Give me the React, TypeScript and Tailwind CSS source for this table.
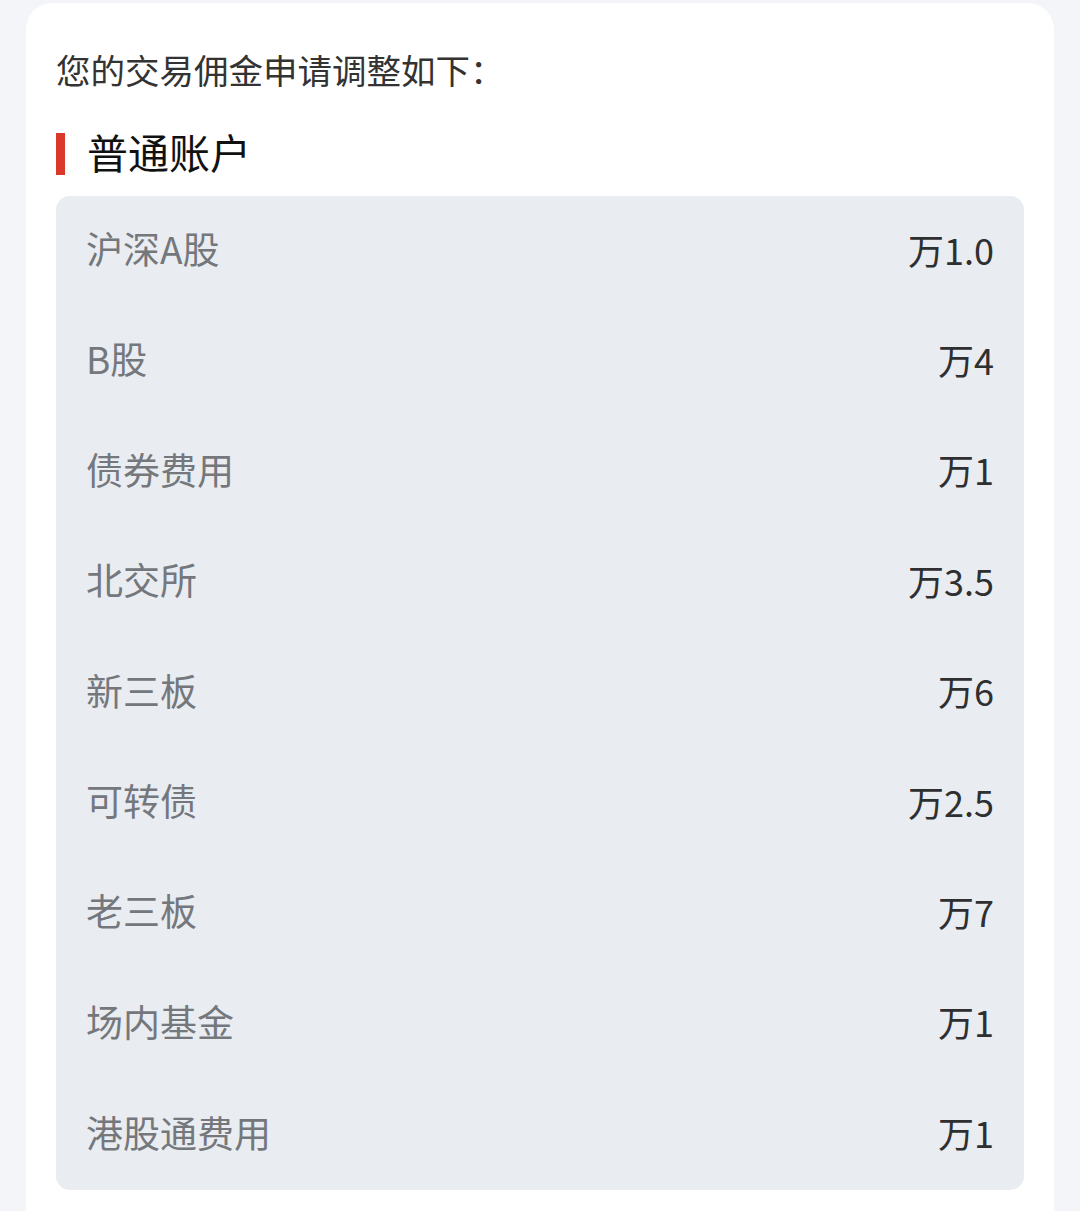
const rows = [
  { label: "沪深A股", value: "万1.0" },
  { label: "B股", value: "万4" },
  { label: "债券费用", value: "万1" },
  { label: "北交所", value: "万3.5" },
  { label: "新三板", value: "万6" },
  { label: "可转债", value: "万2.5" },
  { label: "老三板", value: "万7" },
  { label: "场内基金", value: "万1" },
  { label: "港股通费用", value: "万1" },
];

export default function App() {
  return (
    <div
      className="min-h-[1211px] overflow-hidden bg-[#f4f5f8] pt-[3px]"
      style={{ fontFamily: '"Noto Sans CJK SC", "Noto Sans", sans-serif' }}
    >
      <div className="ml-[26px] w-[1028px] min-h-[1300px] rounded-[26px] bg-white px-[30px] pt-[42px]">
        <p className="text-[34.5px] leading-[48px] text-[#333]">您的交易佣金申请调整如下：</p>

        <div className="mt-[37px] flex h-[48px] items-center gap-[22px]">
          <span className="h-[42px] w-[9px] bg-[#d9382a]" />
          <h2 className="pb-[6px] text-[41px] font-normal leading-[48px] text-[#111]">普通账户</h2>
        </div>

        <div className="mt-[18px] rounded-[14px] bg-[#e9ecf0] px-[30px]">
          {rows.map((row, i) => (
            <div
              key={row.label}
              className={`flex h-[110.4px] items-center justify-between pb-[4px] ${
                i < rows.length - 1 ? "border-b border-[#e7eaee]" : ""
              }`}
            >
              <span className="text-[37px] text-[#74777c]">{row.label}</span>
              <span className="text-[36px] text-[#2e2f31]">{row.value}</span>
            </div>
          ))}
        </div>
      </div>
    </div>
  );
}
